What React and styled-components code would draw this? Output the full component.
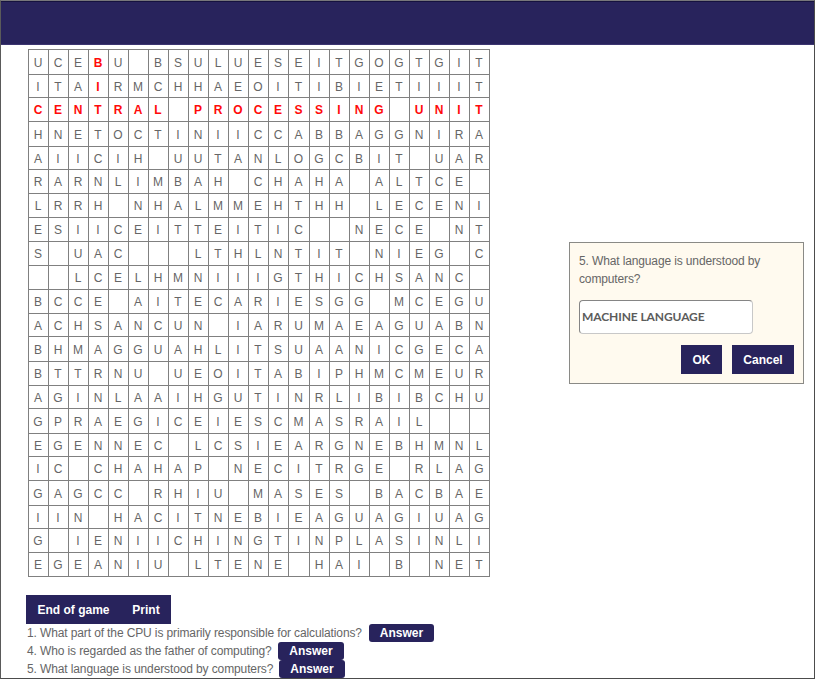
import React from "react";
import styled, { createGlobalStyle } from "styled-components";

const GlobalStyle = createGlobalStyle`
  * { box-sizing: border-box; }
  html, body { margin: 0; padding: 0; }
  body {
    width: 815px;
    height: 679px;
    overflow: hidden;
    background: #fff;
    color: #666;
    font-family: "Liberation Sans", Arial, sans-serif;
    font-size: 12px;
  }
`;

const NAVY = "#28235c";

const Page = styled.div`
  display: flex;
  flex-direction: column;
  width: 815px;
  height: 679px;
  border-style: solid;
  border-width: 1px;
  border-color: #77777b #4c4c4c #4c4c4c #5a5a5a;
  overflow: hidden;
`;

const Banner = styled.header`
  flex: none;
  height: 44px;
  background: ${NAVY};
  border-top: 1px solid #16123f;
  border-bottom: 1px solid #3c3570;
`;

const Main = styled.main`
  display: flex;
  align-items: flex-start;
  padding: 4px 0 0 27px;
`;

const Board = styled.div`
  display: grid;
  grid-template-columns: repeat(13, 20px) 21px repeat(9, 20px);
  grid-template-rows: ${(p) => p.$rows.map((h) => `${h}px`).join(" ")};
  border-top: 1px solid #808080;
  border-left: 1px solid #808080;
`;

const Cell = styled.div`
  display: flex;
  align-items: center;
  justify-content: center;
  border-right: 1px solid #808080;
  border-bottom: 1px solid #808080;
  padding: 1px 1px 0 0;
  font-size: 12px;
  line-height: 14px;
  color: ${(p) => (p.$found ? "#ff0a0a" : "#666")};
  font-weight: ${(p) => (p.$found ? 700 : 400)};
`;

const Dialog = styled.section`
  width: 235px;
  height: 142px;
  margin: 193px 0 0 79px;
  padding: 9px 9px 0;
  background: #fffaef;
  border: 1px solid #8a8a86;
`;

const Prompt = styled.p`
  margin: 0;
  line-height: 18px;
  letter-spacing: -0.13px;
`;

const AnswerInput = styled.input`
  display: block;
  width: 174px;
  height: 34px;
  margin: 12px 0 0;
  padding: 0 2px 2px;
  border: 1px solid #c8c8c8;
  border-top-color: #858585;
  border-left-color: #858585;
  border-radius: 4px;
  background: #fff;
  color: #5c5c5c;
  font: 700 12px Lato, sans-serif;
  letter-spacing: -0.1px;
  outline: none;
`;

const DialogActions = styled.div`
  display: flex;
  justify-content: flex-end;
  gap: 10px;
  margin-top: 11px;
`;

const DialogButton = styled.button`
  width: ${(p) => p.$width}px;
  height: 29px;
  padding: 0;
  border: 0;
  background: ${NAVY};
  color: #fff;
  font: 700 12px "Liberation Sans", Arial, sans-serif;
`;

const Footer = styled.footer`
  padding: 18px 0 0 25px;
`;

const Toolbar = styled.div`
  display: flex;
  width: 145px;
  height: 29px;
  background: ${NAVY};
`;

const ToolButton = styled.button`
  width: ${(p) => p.$width}px;
  height: 29px;
  padding: 0;
  border: 0;
  background: transparent;
  color: #fff;
  font: 700 12px "Liberation Sans", Arial, sans-serif;
`;

const QuestionRow = styled.div`
  display: flex;
  align-items: center;
  height: 18px;
  padding-left: 1px;
  white-space: nowrap;
`;

const QuestionText = styled.span`
  width: ${(p) => p.$width}px;
  letter-spacing: -0.12px;
`;

const AnswerButton = styled.button`
  width: ${(p) => p.$width}px;
  height: 18px;
  padding: 0;
  border: 0;
  border-radius: 3px;
  background: ${NAVY};
  color: #fff;
  font: 700 12px "Liberation Sans", Arial, sans-serif;
`;

const letters = [
  "UCEBU BSULUESEITGOGTGIT",
  "ITAIRMCHHAEOITIBIETIIIT",
  "CENTRAL PROCESSING UNIT",
  "HNETOCTINIICCABBAGGNIRA",
  "AIICIH UUTANLOGCBIT UAR",
  "RARNLIMBAH CHAHA ALTCE ",
  "LRRH NHALMMEHTHH LECENI",
  "ESIICEITTEITIC  NECE NT",
  "S UAC   LTHLNTIT NIEG C",
  "  LCELHMNIIIGTHICHSANC ",
  "BCCE AITECARIESGG MCEGU",
  "ACHSANCUN IARUMAEAGUABN",
  "BHMAGGUAHLITSUAANICGECA",
  "BTTRNU UEOITABIPHMCMEUR",
  "AGINLAAIHGUTINRLIBIBCHU",
  "GPRAEGICEIESCMASRAIL   ",
  "EGENNEC LCSIEARGNEBHMNL",
  "IC CHAHAP NECITRGE RLAG",
  "GAGCC RHIU MASES BACBAE",
  "IIN HACITNEBIEAGUAGIUAG",
  "G IENIICHINGTINPLASINLI",
  "EGEANIU LTENE HAI B NET",
];

const rowHeights = [25, 23, 24, 25, 23, 24, 24, 24, 24, 24, 24, 23, 25, 24, 23, 25, 23, 24, 25, 23, 24, 24];

const isFound = (row, col) => row === 2 || (col === 3 && row < 3);

const questions = [
  { text: "1. What part of the CPU is primarily responsible for calculations?", width: 342, button: 65 },
  { text: "4. Who is regarded as the father of computing?", width: 251, button: 66 },
  { text: "5. What language is understood by computers?", width: 252, button: 66 },
];

export default function App() {
  return (
    <>
      <GlobalStyle />
      <Page>
        <Banner />
        <Main>
          <Board $rows={rowHeights}>
            {letters.map((line, row) =>
              [...line].map((letter, col) => (
                <Cell key={`${row}-${col}`} $found={isFound(row, col)}>
                  {letter.trim()}
                </Cell>
              ))
            )}
          </Board>
          <Dialog>
            <Prompt>5. What language is understood by computers?</Prompt>
            <AnswerInput defaultValue="MACHINE LANGUAGE" />
            <DialogActions>
              <DialogButton $width={41}>OK</DialogButton>
              <DialogButton $width={62}>Cancel</DialogButton>
            </DialogActions>
          </Dialog>
        </Main>
        <Footer>
          <Toolbar>
            <ToolButton $width={95}>End of game</ToolButton>
            <ToolButton $width={50}>Print</ToolButton>
          </Toolbar>
          {questions.map((q) => (
            <QuestionRow key={q.text}>
              <QuestionText $width={q.width}>{q.text}</QuestionText>
              <AnswerButton $width={q.button}>Answer</AnswerButton>
            </QuestionRow>
          ))}
        </Footer>
      </Page>
    </>
  );
}
